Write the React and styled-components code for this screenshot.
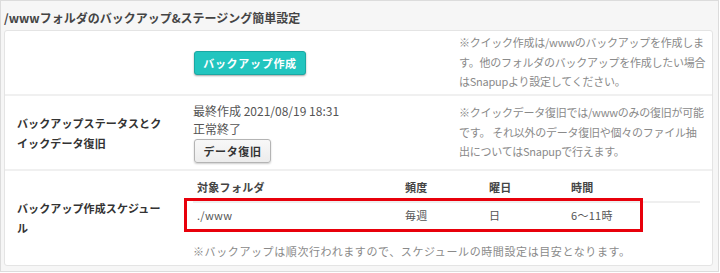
import React from 'react';
import styled, { createGlobalStyle } from 'styled-components';

const GlobalStyle = createGlobalStyle`
body {
  margin: 0;
  background: #fff;
  font-family: "Noto Sans CJK JP", "Noto Sans", sans-serif;
}
`;

const Frame = styled.div`
box-sizing: border-box;
width: 719px;
height: 272px;
border: 1px solid #dcdcdc;
background: #f6f6f6;
padding: 0 5px 0 3px;
display: flex;
flex-direction: column;
`;

const Heading = styled.div`
box-sizing: border-box;
height: 29px;
padding-top: 5px;
line-height: 24px;
font-size: 12px;
font-weight: bold;
color: #444;
`;

const Panel = styled.div`
box-sizing: border-box;
height: 236px;
background: #fff;
border: 1px solid #e4e4e4;
border-radius: 3px;
display: flex;
flex-direction: column;
`;

const Row = styled.div`
box-sizing: border-box;
display: grid;
grid-template-columns: 188px 266px 1fr;
align-items: center;
height: ${(p) => p.h}px;
flex: ${(p) => (p.h ? 'none' : '1')};
border-bottom: ${(p) => (p.last ? 'none' : '2px solid #f0f0f0')};
`;

const Label = styled.div`
padding: 0 30px 0 12px;
font-size: 11px;
font-weight: bold;
letter-spacing: 0.1px;
line-height: 20px;
color: #333;
`;

const Cell = styled.div`
font-size: 12px;
line-height: 18px;
color: #555;
`;

const Note = styled.div`
font-size: 11px;
letter-spacing: ${(p) => (p.spacing === undefined ? -0.25 : p.spacing)}px;
line-height: 19.5px;
white-space: nowrap;
color: #8a8a8a;
`;

const CreateButton = styled.button`
box-sizing: border-box;
width: 112px;
height: 24px;
margin-left: 1px;
border: 1px solid #1aa8a3;
border-radius: 3px;
background: #22c5bf;
color: #fff;
font-family: inherit;
font-size: 11px;
font-weight: bold;
letter-spacing: 0.7px;
box-shadow: 0 1px 2px rgba(0, 0, 0, 0.35);
cursor: pointer;
`;

const RestoreButton = styled.button`
box-sizing: border-box;
display: block;
width: 77px;
height: 24px;
margin: 1px 0 0 1px;
border: 1px solid #b4b4b4;
border-radius: 3px;
background: linear-gradient(#f8f8f8, #ececec);
color: #333;
font-family: inherit;
font-size: 11px;
font-weight: bold;
letter-spacing: 0.6px;
box-shadow: 0 1px 2px rgba(0, 0, 0, 0.2);
cursor: pointer;
`;

const Schedule = styled.div`
grid-column: 2 / 4;
padding-right: 12px;
align-self: stretch;
display: flex;
flex-direction: column;
`;

const TableRow = styled.div`
position: relative;
display: grid;
grid-template-columns: 208px 84px 82px 1fr;
padding: ${(p) => (p.head ? '7px 0 5px' : '3px 0 8px')};
border-bottom: ${(p) => (p.head ? '2px solid #efefef' : 'none')};
font-size: 11px;
font-weight: ${(p) => (p.head ? 'bold' : 'normal')};
letter-spacing: 0.3px;
line-height: 18px;
color: ${(p) => (p.head ? '#444' : '#555')};
& > span {
  padding-left: 4px;
}
`;

const Highlight = styled.div`
position: absolute;
top: -5px;
left: -9px;
width: 459px;
height: 34px;
box-sizing: border-box;
border: 3px solid #e8000b;
`;

const ScheduleNote = styled(Note)`
margin-top: 10px;
line-height: 18px;
`;

export default function App() {
  return (
    <>
      <GlobalStyle />
      <Frame>
        <Heading>/wwwフォルダのバックアップ&amp;ステージング簡単設定</Heading>
        <Panel>
          <Row h={65}>
            <Label />
            <Cell>
              <CreateButton>バックアップ作成</CreateButton>
            </Cell>
            <Note>
              ※クイック作成は/wwwのバックアップを作成しま
              <br />
              す。他のフォルダのバックアップを作成したい場合
              <br />
              はSnapupより設定してください。
            </Note>
          </Row>
          <Row h={75}>
            <Label>バックアップステータスとクイックデータ復旧</Label>
            <Cell>
              <div>最終作成 2021/08/19 18:31</div>
              <div>正常終了</div>
              <RestoreButton>データ復旧</RestoreButton>
            </Cell>
            <Note>
              ※クイックデータ復旧では/wwwのみの復旧が可能
              <br />
              です。 それ以外のデータ復旧や個々のファイル抽
              <br />
              出についてはSnapupで行えます。
            </Note>
          </Row>
          <Row last>
            <Label>バックアップ作成スケジュール</Label>
            <Schedule>
              <TableRow head>
                <span>対象フォルダ</span>
                <span>頻度</span>
                <span>曜日</span>
                <span>時間</span>
              </TableRow>
              <TableRow>
                <Highlight />
                <span>./www</span>
                <span>毎週</span>
                <span>日</span>
                <span>6～11時</span>
              </TableRow>
              <ScheduleNote spacing={0.6}>
                ※バックアップは順次行われますので、スケジュールの時間設定は目安となります。
              </ScheduleNote>
            </Schedule>
          </Row>
        </Panel>
      </Frame>
    </>
  );
}
